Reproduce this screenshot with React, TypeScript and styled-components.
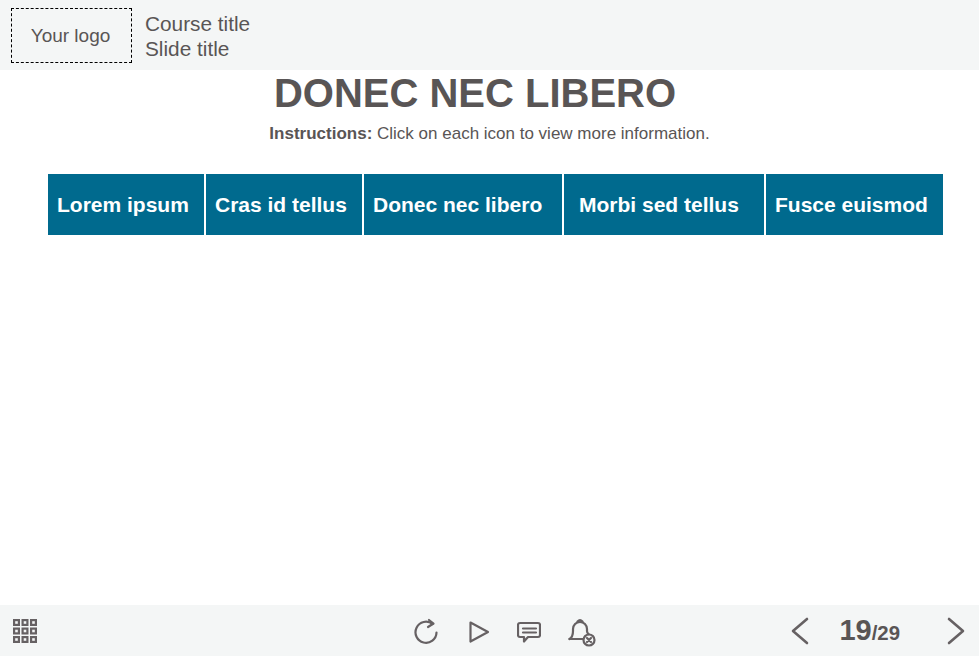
import React from 'react';
import styled, { createGlobalStyle } from 'styled-components';

const GlobalStyle = createGlobalStyle`
  html, body {
    margin: 0;
    padding: 0;
    background: #ffffff;
    font-family: "Liberation Sans", Arial, sans-serif;
    color: #595555;
  }
`;

const Page = styled.div`
  width: 979px;
  height: 656px;
  display: flex;
  flex-direction: column;
  overflow: hidden;
`;

const Header = styled.header`
  height: 70px;
  background: #f4f6f6;
  display: flex;
  align-items: flex-start;
  padding: 8px 0 0 11px;
  box-sizing: border-box;
`;

const Logo = styled.div`
  width: 121px;
  height: 55px;
  box-sizing: border-box;
  border: 1px dashed #000;
  padding-right: 2px;
  display: flex;
  align-items: center;
  justify-content: center;
  font-size: 19px;
`;

const Titles = styled.div`
  margin-left: 13px;
  padding-top: 3px;
  font-size: 20.8px;
  line-height: 25px;
`;

const Main = styled.main`
  flex: 1;
  display: flex;
  flex-direction: column;
`;

const Heading = styled.h1`
  margin: 0;
  padding: 0 29px 0 0;
  text-align: center;
  font-size: 40px;
  line-height: 46px;
  font-weight: 700;
`;

const Instructions = styled.p`
  margin: 7px 0 0;
  text-align: center;
  font-size: 17px;
  line-height: 22px;
`;

const Tabs = styled.div`
  display: flex;
  gap: 2px;
  margin: 29px 0 0 48px;
`;

const Tab = styled.button<{ $width: number; $indent: number }>`
  width: ${(p) => p.$width}px;
  height: 61px;
  padding: 0 0 0 ${(p) => p.$indent}px;
  border: 0;
  background: #006a8e;
  color: #fff;
  font-family: inherit;
  font-size: 21px;
  font-weight: 700;
  text-align: left;
  white-space: nowrap;
`;

const Footer = styled.footer`
  height: 51px;
  background: #f4f6f6;
  display: grid;
  grid-template-columns: 1fr auto 1fr;
  align-items: center;
  padding: 0 14px 0 13px;
`;

const Cluster = styled.div<{ $end?: boolean }>`
  display: flex;
  align-items: center;
  justify-content: ${(p) => (p.$end ? 'flex-end' : 'flex-start')};
`;

const Controls = styled(Cluster)`
  gap: 27px;
  margin-left: 34px;
`;

const Pager = styled.div`
  font-weight: 700;
  font-size: 20.4px;
  margin: 0 47px 0 30px;
  white-space: nowrap;
  span {
    font-size: 29px;
  }
`;

const stroke = {
  fill: 'none',
  stroke: '#666163',
  strokeWidth: 2.2,
  strokeLinecap: 'round' as const,
  strokeLinejoin: 'round' as const,
};

const GridIcon = () => (
  <svg width="25" height="25" viewBox="0 0 25 25">
    {[0, 8.5, 17].flatMap((y) =>
      [0, 8.5, 17].map((x) => (
        <rect key={`${x}-${y}`} x={x + 1.1} y={y + 2.1} width="4.8" height="4.8" fill="none" stroke="#666163" strokeWidth="2.2" />
      )),
    )}
  </svg>
);

const ReloadIcon = () => (
  <svg width="27" height="27" viewBox="0 0 27 27" {...stroke}>
    <path d="M18.5 7A10.5 10.5 0 1 0 22.5 15.5" />
    <path d="M15 3 L19.5 6.5 L14 10" />
  </svg>
);

const PlayIcon = () => (
  <svg width="22" height="25" viewBox="0 0 22 25" {...stroke}>
    <path d="M2.5 4.5 L20 14 L2.5 23.5 Z" />
  </svg>
);

const CommentIcon = () => (
  <svg width="24" height="27" viewBox="0 0 24 27" {...stroke}>
    <path d="M3 6 H21 Q23 6 23 8 V18 Q23 20 21 20 H11 L7 24.5 V20 H3 Q1 20 1 18 V8 Q1 6 3 6 Z" />
    <path d="M6 11.5 H19 M6 15.5 H19" />
  </svg>
);

const BellIcon = () => (
  <svg width="30" height="33" viewBox="0 0 30 33" {...stroke}>
    <path d="M1.5 25 Q5 23 5 17 V15 A7 7 0 0 1 19 15 V17 Q19 19 20.5 20" />
    <path d="M1.5 25 H15" />
    <path d="M9.5 7.5 Q12 5 14.5 7.5" />
    <circle cx="21" cy="26" r="5.5" />
    <path d="M19 24 L23 28 M23 24 L19 28" />
  </svg>
);

const ChevronLeft = () => (
  <svg width="18" height="28" viewBox="0 0 18 28" {...stroke} strokeWidth="2.6">
    <path d="M16 2 L2 14 L16 26" />
  </svg>
);

const ChevronRight = () => (
  <svg width="18" height="28" viewBox="0 0 18 28" {...stroke} strokeWidth="2.6">
    <path d="M2 2 L16 14 L2 26" />
  </svg>
);

const tabs = [
  { label: 'Lorem ipsum', width: 156, indent: 9 },
  { label: 'Cras id tellus', width: 156, indent: 9 },
  { label: 'Donec nec libero', width: 198, indent: 9 },
  { label: 'Morbi sed tellus', width: 200, indent: 15 },
  { label: 'Fusce euismod', width: 177, indent: 9 },
];

export default function App() {
  return (
    <Page>
      <GlobalStyle />
      <Header>
        <Logo>Your logo</Logo>
        <Titles>
          Course title
          <br />
          Slide title
        </Titles>
      </Header>
      <Main>
        <Heading>DONEC NEC LIBERO</Heading>
        <Instructions>
          <b>Instructions:</b> Click on each icon to view more information.
        </Instructions>
        <Tabs>
          {tabs.map((t) => (
            <Tab key={t.label} $width={t.width} $indent={t.indent}>
              {t.label}
            </Tab>
          ))}
        </Tabs>
      </Main>
      <Footer>
        <Cluster>
          <GridIcon />
        </Cluster>
        <Controls>
          <ReloadIcon />
          <PlayIcon />
          <CommentIcon />
          <BellIcon />
        </Controls>
        <Cluster $end>
          <ChevronLeft />
          <Pager>
            <span>19</span>/29
          </Pager>
          <ChevronRight />
        </Cluster>
      </Footer>
    </Page>
  );
}
